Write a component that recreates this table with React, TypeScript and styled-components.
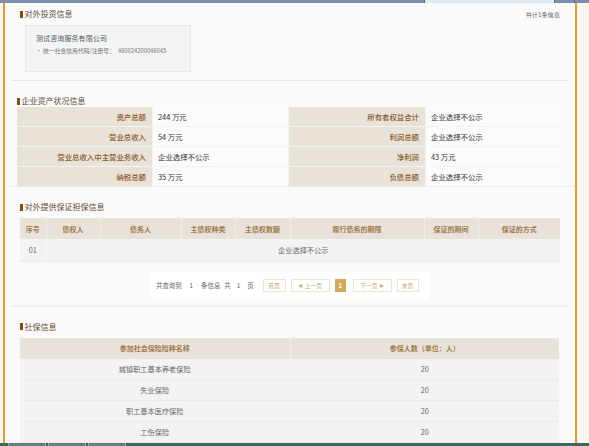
import React from "react";
import styled, { createGlobalStyle } from "styled-components";

const Global = createGlobalStyle`
  html, body { margin: 0; padding: 0; background: #faf6ee; }
  body { font-family: "Noto Sans CJK SC", "Noto Sans", sans-serif; }
  * { box-sizing: border-box; }
`;

const Screen = styled.div`
  width: 589px;
  height: 446px;
  display: flex;
  flex-direction: column;
  overflow: hidden;
  background: #faf6ee;
`;

const TopStrip = styled.div`
  height: 3px;
  display: flex;
  background: #7d8ea8;
  flex-shrink: 0;
`;

const StripSeg = styled.div<{ $w: number; $bg: string }>`
  width: ${(p) => p.$w}px;
  background: ${(p) => p.$bg};
  border-right: 1px solid #5b6b85;
`;

const Middle = styled.div`
  flex: 1;
  display: flex;
  min-height: 0;
`;

const Gutter = styled.div<{ $w: number }>`
  width: ${(p) => p.$w}px;
  background: #faf6ee;
  flex-shrink: 0;
`;

const GoldLine = styled.div`
  width: 2px;
  background: #d8a03c;
  flex-shrink: 0;
`;

const Content = styled.div`
  flex: 1;
  background: #fafafa;
  display: flex;
  flex-direction: column;
  overflow: hidden;
`;

const Section = styled.section<{ $pt: number; $border?: boolean }>`
  padding-top: ${(p) => p.$pt}px;
  display: flex;
  flex-direction: column;
  border-bottom: ${(p) => (p.$border ? "1px solid #ececec" : "none")};
`;

const TitleRow = styled.div<{ $left: number; $mb: number }>`
  height: 10px;
  display: flex;
  align-items: center;
  justify-content: space-between;
  padding: 0 15px 0 ${(p) => p.$left}px;
  margin-bottom: ${(p) => p.$mb}px;
`;

const Title = styled.h2`
  margin: 0;
  display: flex;
  align-items: center;
  gap: 2px;
  font-size: 8px;
  line-height: 10px;
  font-weight: 400;
  color: #5e4b38;
  &::before {
    content: "";
    width: 2.5px;
    height: 7px;
    background: #7d5112;
  }
`;

const Count = styled.span`
  font-size: 6.2px;
  color: #666;
`;

const Card = styled.div`
  margin-left: 20px;
  width: 166px;
  height: 47px;
  background: #f3f4f5;
  border: 1px solid #e7e8ea;
  padding: 8px 0 0 10px;
  display: flex;
  flex-direction: column;
  gap: 4px;
`;

const CardName = styled.div`
  font-size: 7px;
  line-height: 9px;
  color: #555;
  letter-spacing: 0.1px;
`;

const CardMeta = styled.div`
  font-size: 5.8px;
  line-height: 8px;
  color: #777;
  span { margin-left: 3px; }
`;

const Divider = styled.div<{ $h: number; $mt: number }>`
  height: ${(p) => p.$h}px;
  margin: ${(p) => p.$mt}px 7px 0 7px;
  background: ${(p) => (p.$h > 1 ? "#f0f0f0" : "#e6e6e6")};
`;

const AssetGrid = styled.div`
  margin: 0 13px 0 12px;
  display: grid;
  grid-template-columns: 135px 135px 136px 1fr;
  grid-auto-rows: 19px;
  gap: 1px;
  background: #f2f2f2;
`;

const Cell = styled.div<{ $label?: boolean }>`
  display: flex;
  align-items: center;
  justify-content: ${(p) => (p.$label ? "flex-end" : "flex-start")};
  padding: ${(p) => (p.$label ? "0 6px 0 0" : "0 0 0 5px")};
  background: ${(p) => (p.$label ? "#e9e2d9" : "#fbfbfb")};
  color: ${(p) => (p.$label ? "#8a5a28" : "#333")};
  font-size: 7.4px;
  font-weight: ${(p) => (p.$label ? 500 : 400)};
`;

const DataTable = styled.table<{ $right: number }>`
  margin: 0 ${(p) => p.$right}px 0 15px;
  border-collapse: collapse;
  table-layout: fixed;
  width: calc(100% - ${(p) => p.$right + 15}px);
`;

const Th = styled.th<{ $w?: number }>`
  width: ${(p) => (p.$w ? `${p.$w}px` : "auto")};
  height: 21px;
  padding: 0;
  background: #e9e2da;
  color: #a07b4c;
  font-size: 7px;
  font-weight: 700;
  text-align: center;
  border-right: 1px solid #f3eee8;
  &:last-child { border-right: none; }
`;

const Td = styled.td<{ $h: number }>`
  height: ${(p) => p.$h}px;
  padding: 0;
  background: #f3f3f3;
  color: #666;
  font-size: 7.2px;
  text-align: center;
  border-bottom: 1px solid #eaeaea;
  border-right: 1px solid #f8f8f8;
  &:last-child { border-right: none; }
`;

const Pager = styled.div`
  margin: 10px auto 0;
  width: 278px;
  height: 27px;
  background: #fff;
  display: flex;
  align-items: center;
  padding-left: 5px;
  font-size: 6.4px;
  color: #666;
`;

const PagerText = styled.span<{ $ml: number }>`
  margin-left: ${(p) => p.$ml}px;
`;

const PageBtn = styled.span<{ $w: number; $active?: boolean; $ml: number }>`
  width: ${(p) => p.$w}px;
  height: 13px;
  margin-left: ${(p) => p.$ml}px;
  display: flex;
  align-items: center;
  justify-content: center;
  gap: 2px;
  border: 1px solid ${(p) => (p.$active ? "#d4a95a" : "#efe4d3")};
  background: ${(p) => (p.$active ? "#d4a95a" : "#fff")};
  color: ${(p) => (p.$active ? "#fff" : "#cba777")};
  font-size: 5.8px;
  font-weight: ${(p) => (p.$active ? 700 : 400)};
`;

const Arrow = styled.span`
  font-size: 4.5px;
`;

const Taskbar = styled.div`
  height: 3px;
  flex-shrink: 0;
  display: flex;
  gap: 2px;
  padding-left: 8px;
  background: #3c675d;
`;

const TaskItem = styled.div`
  width: 38px;
  background: #5f8279;
  border-left: 1px solid #9aa9a5;
  border-right: 1px solid #9aa9a5;
`;

const assets: [string, string, string, string][] = [
  ["资产总额", "244 万元", "所有者权益合计", "企业选择不公示"],
  ["营业总收入", "54 万元", "利润总额", "企业选择不公示"],
  ["营业总收入中主营业务收入", "企业选择不公示", "净利润", "43 万元"],
  ["纳税总额", "35 万元", "负债总额", "企业选择不公示"],
];

const guaranteeCols: [string, number][] = [
  ["序号", 26],
  ["债权人", 54],
  ["债务人", 81],
  ["主债权种类", 54],
  ["主债权数额", 55],
  ["履行债务的期限", 134],
  ["保证的期间", 54],
  ["保证的方式", 82],
];

const insurance = ["城镇职工基本养老保险", "失业保险", "职工基本医疗保险", "工伤保险"];

export default function App() {
  return (
    <>
      <Global />
      <Screen>
        <TopStrip>
          <StripSeg $w={425} $bg="#7d8ea8" />
          <StripSeg $w={130} $bg="#dfeaf6" />
          <StripSeg $w={20} $bg="#7d8ea8" />
        </TopStrip>
        <Middle>
          <Gutter $w={3} />
          <GoldLine />
          <Content>
            <Section $pt={6}>
              <TitleRow $left={15} $mb={6}>
                <Title>对外投资信息</Title>
                <Count>共计1条信息</Count>
              </TitleRow>
              <Card>
                <CardName>测试咨询服务有限公司</CardName>
                <CardMeta>
                  · 统一社会信用代码/注册号：<span>460024200046045</span>
                </CardMeta>
              </Card>
              <Divider $h={1} $mt={8} />
            </Section>

            <Section $pt={15} $border>
              <TitleRow $left={12} $mb={1}>
                <Title>企业资产状况信息</Title>
              </TitleRow>
              <AssetGrid>
                {assets.map((r) => (
                  <React.Fragment key={r[0]}>
                    <Cell $label>{r[0]}</Cell>
                    <Cell>{r[1]}</Cell>
                    <Cell $label>{r[2]}</Cell>
                    <Cell>{r[3]}</Cell>
                  </React.Fragment>
                ))}
              </AssetGrid>
            </Section>

            <Section $pt={15}>
              <TitleRow $left={15} $mb={6}>
                <Title>对外提供保证担保信息</Title>
              </TitleRow>
              <DataTable $right={15}>
                <thead>
                  <tr>
                    {guaranteeCols.map(([t, w]) => (
                      <Th key={t} $w={w}>
                        {t}
                      </Th>
                    ))}
                  </tr>
                </thead>
                <tbody>
                  <tr>
                    <Td $h={22}>01</Td>
                    <Td $h={22} colSpan={7}>
                      企业选择不公示
                    </Td>
                  </tr>
                </tbody>
              </DataTable>
              <Pager>
                <PagerText $ml={0}>共查询到</PagerText>
                <PagerText $ml={8}>1</PagerText>
                <PagerText $ml={8}>条信息</PagerText>
                <PagerText $ml={4}>共</PagerText>
                <PagerText $ml={6}>1</PagerText>
                <PagerText $ml={7}>页</PagerText>
                <PageBtn $w={23} $ml={9}>首页</PageBtn>
                <PageBtn $w={39} $ml={5}>
                  <Arrow>◀</Arrow>上一页
                </PageBtn>
                <PageBtn $w={11} $ml={5} $active>
                  1
                </PageBtn>
                <PageBtn $w={39} $ml={7}>
                  下一页<Arrow>▶</Arrow>
                </PageBtn>
                <PageBtn $w={22} $ml={5}>末页</PageBtn>
              </Pager>
              <Divider $h={2} $mt={6} />
            </Section>

            <Section $pt={15}>
              <TitleRow $left={15} $mb={6}>
                <Title>社保信息</Title>
              </TitleRow>
              <DataTable $right={16}>
                <thead>
                  <tr>
                    <Th $w={270}>参加社会保险险种名称</Th>
                    <Th>参保人数（单位：人）</Th>
                  </tr>
                </thead>
                <tbody>
                  {insurance.map((name) => (
                    <tr key={name}>
                      <Td $h={21}>{name}</Td>
                      <Td $h={21}>20</Td>
                    </tr>
                  ))}
                </tbody>
              </DataTable>
            </Section>
          </Content>
          <GoldLine />
          <Gutter $w={12} />
        </Middle>
        <Taskbar>
          <TaskItem />
          <TaskItem />
          <TaskItem />
        </Taskbar>
      </Screen>
    </>
  );
}
